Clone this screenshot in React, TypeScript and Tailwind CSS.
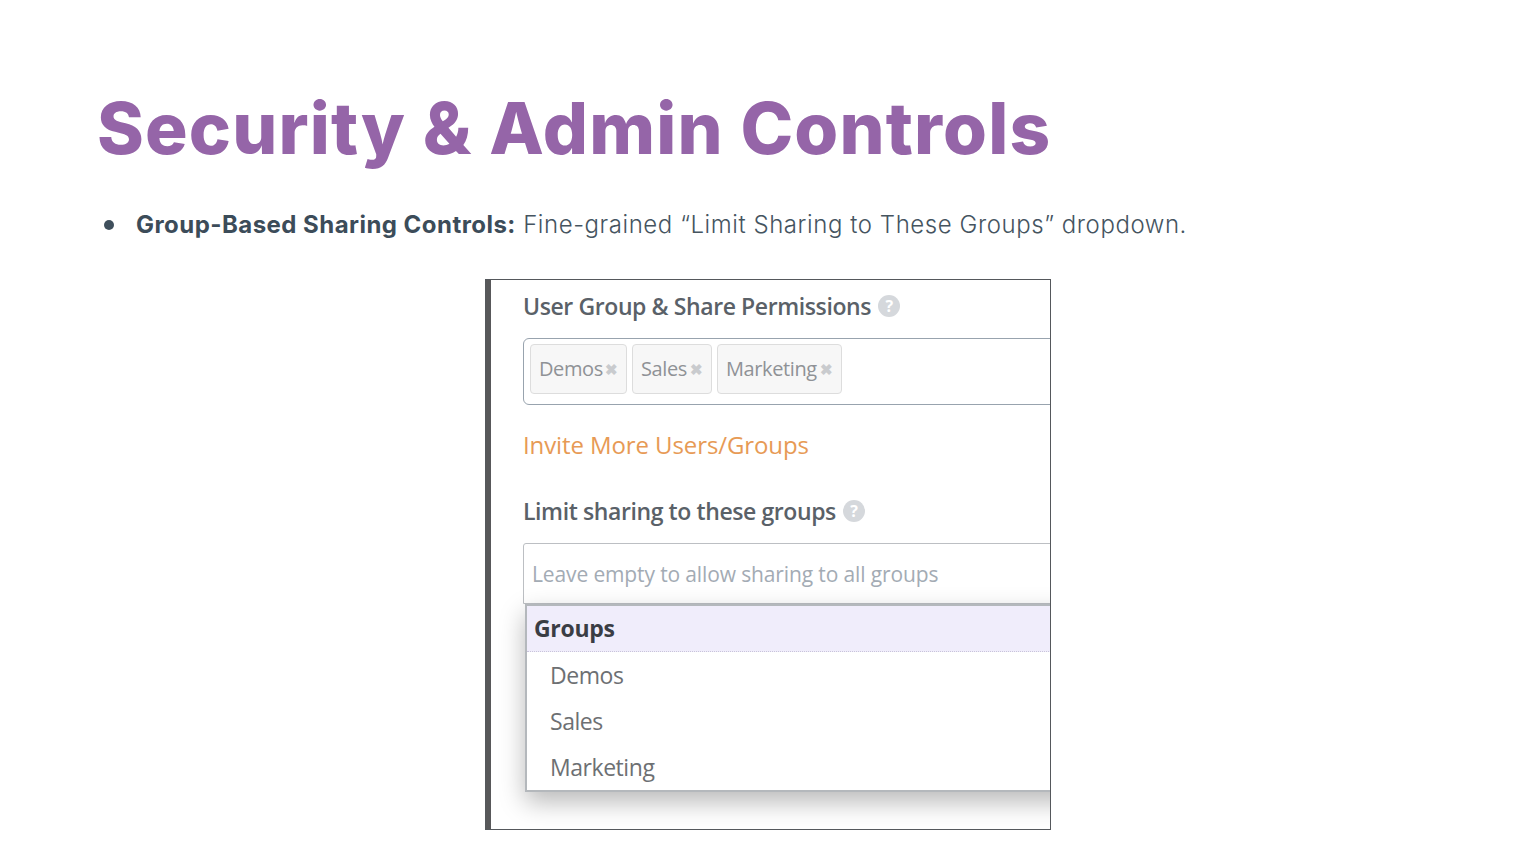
import React from 'react'

const QuestionIcon = () => (
    <span className="ml-[7px] flex h-[22px] w-[22px] shrink-0 items-center justify-center rounded-full bg-[#d5d8dc] text-[16px] font-bold leading-none text-white">
        ?
    </span>
)

const Tag = ({ label, width }: { label: string; width: string }) => (
    <div className={`flex h-[50px] items-center justify-between rounded-[4px] border border-[#dddddd] bg-[#f7f7f7] pl-[8px] pr-[8px] text-[20px] tracking-[-0.4px] text-[#8f9296] ${width}`}>
        <span>{label}</span>
        <span className="text-[15px] font-bold text-[#c9cbce]">✖</span>
    </div>
)

const App = () => {
    return (
        <div className="h-[864px] w-full overflow-hidden bg-white">
            <h1 className="pl-[97px] pt-[85px] font-['Inter',sans-serif] text-[71px] font-extrabold leading-[86px] tracking-[1.17px] text-[#9565a8]">
                Security &amp; Admin Controls
            </h1>

            <div className="mt-[40px] flex items-center pl-[104px] font-['Inter',sans-serif] text-[24px] leading-[28px] tracking-[0.56px] text-[#45545f]">
                <span className="mr-[22px] h-[10px] w-[10px] rounded-full bg-[#3f4f5c]" />
                <p className="font-light">
                    <strong className="font-bold tracking-[0.46px] text-[#3c4c59]">Group-Based Sharing Controls:</strong> Fine-grained “Limit Sharing to These Groups” dropdown.
                </p>
            </div>

            {/* embedded screenshot */}
            <div className="mx-auto mt-[40px] h-[551px] w-[566px] overflow-hidden border border-[#55585c] bg-white font-['Open_Sans',sans-serif]">
                <div className="h-full border-l-[5px] border-[#58585a] pl-[32px] pt-[11px]">
                    <div className="flex h-[30px] items-center text-[23px] font-semibold tracking-[-0.4px] text-[#5a6168]">
                        User Group &amp; Share Permissions
                        <QuestionIcon />
                    </div>

                    <div className="mt-[17px] flex h-[67px] w-[560px] items-start gap-[5px] rounded-l-[6px] border-[1.5px] border-[#98a3ae] pl-[6px] pt-[5px]">
                        <Tag label="Demos" width="w-[97px]" />
                        <Tag label="Sales" width="w-[80px]" />
                        <Tag label="Marketing" width="w-[125px]" />
                    </div>

                    <div className="mt-[24px] h-[32px] text-[24px] leading-[32px] tracking-[-0.1px] text-[#e79a55]">
                        Invite More Users/Groups
                    </div>

                    <div className="mt-[35px] flex h-[30px] items-center text-[23px] font-semibold tracking-[-0.4px] text-[#5a6168]">
                        Limit sharing to these groups
                        <QuestionIcon />
                    </div>

                    <div className="mt-[17px] flex h-[61px] w-[560px] items-center rounded-tl-[3px] border border-[#bcbfc3] pl-[8px] pt-[2px] text-[21px] tracking-[-0.13px] text-[#a3abb4]">
                        Leave empty to allow sharing to all groups
                    </div>

                    <div className="ml-[2px] w-[560px] border-y-2 border-l-2 border-[#b4b8bc] bg-white shadow-[0_10px_24px_rgba(0,0,0,0.28)]">
                        <div className="flex h-[46px] items-center border-b border-dotted border-[#c9c4da] bg-[#f0edfb] pl-[7px] text-[23px] font-bold tracking-[-0.3px] text-[#3a3d44]">
                            Groups
                        </div>
                        <div className="pl-[23px] text-[23px] tracking-[-0.45px] text-[#6d7073]">
                            <div className="flex h-[46px] items-center">Demos</div>
                            <div className="flex h-[46px] items-center">Sales</div>
                            <div className="flex h-[46px] items-center">Marketing</div>
                        </div>
                    </div>
                </div>
            </div>
        </div>
    )
}

export default App
